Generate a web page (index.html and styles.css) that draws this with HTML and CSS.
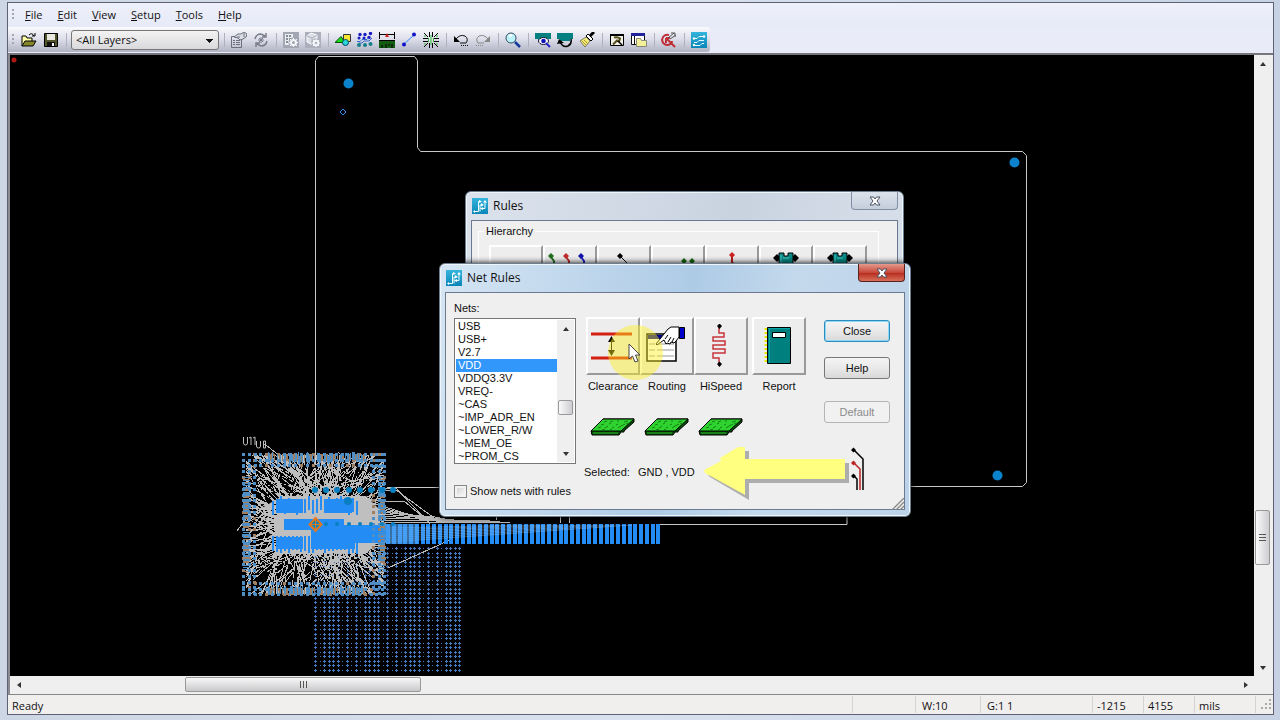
FILE: index.html
```html
<!DOCTYPE html>
<html lang="en">
<head>
<meta charset="utf-8">
<title>PCB Layout</title>
<link rel="stylesheet" href="styles.css">
</head>
<body>
<svg class="defs" aria-hidden="true">
  <defs>
    <linearGradient id="blue" x1="0" y1="0" x2="0" y2="1"><stop offset="0" stop-color="#35b4dc"/><stop offset="1" stop-color="#0a86b8"/></linearGradient>
    <symbol id="app" viewBox="0 0 16 16">
      <rect width="16" height="16" fill="url(#blue)"/>
      <path d="M3 13.500h3.500v-10H8M8 13.500V7h1M13 4v6.500h-3" fill="none" stroke="#eaffff"/>
      <path d="M1 13.500l2-1.500v3zM7 2l3 1.500L7 5zM11 4.500L13 2l2 2.500zM9 5l3 2-3 1.500zM11 9v3l-3-1.500z" fill="#fff"/>
    </symbol>
    <symbol id="board" viewBox="0 0 45 18">
      <path d="M13 1h31v3L34 13v1h-3l-2 3H2l-1-4z" fill="#0b4d0b" stroke="#000"/>
      <path d="M13 1h31L31 13H1z" fill="#2fd32f" stroke="#000"/>
      <path d="M3 15h25" stroke="#27b827"/>
      <path d="M14 4l3-1M20 4l3-1M27 3h2M34 4l4-1M11 7l3-1M19 6l2-1M26 7l2-1M31 8l4-2M8 10l3-1M15 10l3-2M22 10l2-1M28 10l3-2M12 12l3-1M20 12l2-1M36 6l2-1" stroke="#0c6b0c" stroke-width=".8" fill="none"/>
    </symbol>
    <symbol id="part" viewBox="0 0 26 20">
      <path d="M0 6l4-4 4 4-4 4zM18 6l4-4 4 4-4 4z"/>
      <path d="M6 1h5v3h4V1h5v17H6z" fill="#098a86" stroke="#000"/>
      <path d="M8 3v12M10 6h6" stroke="#47c7c0"/>
    </symbol>
    <symbol id="cross" viewBox="0 0 12 10">
      <path d="M1 1h3.500L6 3l1.500-2H11L8 5l3 4H7.500L6 7 4.500 9H1l3-4z" fill="#fff" stroke="#4a5060"/>
    </symbol>
  </defs>
</svg>

<div class="window">
  <div class="client">
    <nav class="menubar">
      <span class="grip"></span>
      <button><u>F</u>ile</button><button><u>E</u>dit</button><button><u>V</u>iew</button><button><u>S</u>etup</button><button><u>T</u>ools</button><button><u>H</u>elp</button>
    </nav>

    <div class="toolrow">
      <div class="toolbar">
        <span class="grip"></span>
        <button class="tool" aria-label="Open"><svg viewBox="0 0 16 16"><path d="M1 14V4h4l1 2h5v3" fill="#ffffa8" stroke="#000"/><path d="M1 14l3-5h11l-3 5z" fill="#85852a" stroke="#000"/><path d="M8 3q3-3 5 1M11 4h3V1" fill="none" stroke="#000"/></svg></button>
        <button class="tool" aria-label="Save"><svg viewBox="0 0 16 16"><path d="M1.500 1.500h13v13h-13z" fill="#55552b" stroke="#000"/><path d="M4 2h8v6H4z" fill="#e8e8e0"/><path d="M4 10h8v4H4z" fill="#111"/><path d="M9 11h2v3H9z" fill="#fff"/></svg></button>
        <span class="sep"></span>
        <select class="layers" aria-label="Layer"><option>&lt;All Layers&gt;</option></select>
        <span class="sep"></span>
        <button class="tool" aria-label="Properties"><svg viewBox="0 0 16 16" fill="none" stroke="#6d707c"><path d="M.5 4.500h10v11H.5zM2 8.500h2M5 8.500h4M2 10.500h2M5 10.500h4M2 12.500h2M5 12.500h4"/><path d="M3 5l4-3h3l3-2 3 2-1 3-3 2-3 1-2-2z" fill="#dcdce6"/><path d="M13 1v4M6 5h3"/></svg></button>
        <button class="tool" aria-label="Cycle"><svg viewBox="0 0 16 16" fill="none" stroke="#7b7e8a" stroke-width="1.500"><path d="M2 7q1-5 6-5l4 2M14 9q-1 5-6 5l-4-2M13 1v4H9M3 15v-4h4"/><path d="M8 5v6M5 8h6M6 6l4 4M10 6l-4 4" stroke-width="1"/></svg></button>
        <span class="sep"></span>
        <button class="tool" aria-label="Board options"><svg viewBox="0 0 16 16"><path d="M0 0h16v16H0z" fill="#a3a6b3"/><path d="M2 2h8v11H2z" fill="#eceef4"/><path d="M3 4h2M6 4h2M3 7h2M6 7h2M3 10h2" stroke="#888b98" stroke-width="2"/><circle cx="10.500" cy="10.500" r="5" fill="#a3a6b3"/><circle cx="10.500" cy="10.500" r="2.500" fill="none" stroke="#f4f6fa" stroke-width="2"/><path d="M10.500 6v2M10.500 13v2M6 10.500h2M13 10.500h2M7 7l2 2M12 12l2 2M14 7l-2 2M9 12l-2 2" stroke="#f4f6fa"/></svg></button>
        <button class="tool" aria-label="Part options"><svg viewBox="0 0 16 16"><path d="M0 0h16v16H0z" fill="#adb0bc"/><path d="M2 4l4-3 6 2v7l-4 3-6-3z" fill="#dcdfe8" stroke="#fff"/><path d="M2 4l5 2 5-3M7 6v6" fill="none" stroke="#adb0bc"/><circle cx="11" cy="11" r="4.500" fill="#adb0bc"/><circle cx="11" cy="11" r="2.200" fill="none" stroke="#f4f6fa" stroke-width="2"/><path d="M11 7v2M11 13v2M7 11h2M13 11h2M8 8l2 2M12 12l2 2M14 8l-2 2M10 12l-2 2" stroke="#f4f6fa"/></svg></button>
        <span class="sep"></span>
        <button class="tool" aria-label="Drafting"><svg viewBox="0 0 16 16"><path d="M0 10.500l6-6 4 6z" fill="#19e019" stroke="#044f04"/><path d="M8.500 2.500h7v7h-7z" fill="#f7e531" stroke="#333"/><circle cx="10.500" cy="10.500" r="3" fill="#2bd7d7" stroke="#046"/></svg></button>
        <button class="tool" aria-label="Design"><svg viewBox="0 0 16 16"><g fill="#1b1bc4"><circle cx="3" cy="2.500" r="1.700"/><circle cx="8" cy="2.500" r="1.700"/><circle cx="13.500" cy="1.500" r="1.700"/><circle cx="2" cy="6" r="1.500"/><circle cx="7" cy="6" r="1.500"/><circle cx="12" cy="5.500" r="1.700"/></g><path d="M0 9.500h3l2-2h5l2-2M2 11h3l2-2h5l3-3" fill="none" stroke="#36c"/><g fill="#14808a"><circle cx="2" cy="13" r="2"/><circle cx="8" cy="13" r="2"/><circle cx="13.500" cy="12" r="2"/></g></svg></button>
        <button class="tool" aria-label="Dimension"><svg viewBox="0 0 16 16"><path d="M.5 0v7M15.500 0v7M1 2.500h14" fill="none" stroke="#000"/><path d="M6 5l2-4 2 4z" fill="#d02020"/><path d="M0 8h16v8H0z" fill="#125c12"/><path d="M0 8.500h16" stroke="#000"/><path d="M3 13v3M7 12v4M9 13h2M13 12v4" stroke="#000"/></svg></button>
        <button class="tool" aria-label="Route"><svg viewBox="0 0 16 16"><path d="M3 12L13 3" stroke="#38f"/><circle cx="3" cy="12.500" r="2" fill="#11c"/><circle cx="13" cy="2.500" r="2" fill="#11c"/></svg></button>
        <button class="tool" aria-label="Fanout"><svg viewBox="0 0 16 16"><path d="M6.500 0v5M9.500 0v5M6.500 16v-5M9.500 16v-5M1 1l4 4M15 1l-4 4M1 15l4-4M15 15l-4-4M0 6.500h5M0 9.500h5M11 6.500h5M11 9.500h5" fill="none" stroke="#000"/><path d="M8 3v10M5.500 6v4M10.500 6v4M1 4h2M13 4h2M1 12h2M13 12h2" stroke="#37b837"/></svg></button>
        <span class="sep"></span>
        <button class="tool" aria-label="Undo"><svg viewBox="0 0 16 16"><path d="M3 7q4-5 9-3 4 3 1 7H7" fill="none" stroke="#111"/><path d="M1 4v6h6z"/><path d="M8 13.500h7" stroke="#111" stroke-dasharray="1 1"/></svg></button>
        <button class="tool" aria-label="Redo"><svg viewBox="0 0 16 16"><path d="M13 7q-4-5-9-3-4 3-1 7h6" fill="none" stroke="#888"/><path d="M15 4v6H9z" fill="#888"/><path d="M1 13.500h7" stroke="#888" stroke-dasharray="1 1"/></svg></button>
        <span class="sep"></span>
        <button class="tool" aria-label="Zoom"><svg viewBox="0 0 16 16"><circle cx="6" cy="6" r="5" fill="#bdf3fb" stroke="#344b62"/><path d="M10 10l5 5" stroke="#113a9b" stroke-width="2.500"/><path d="M4 4l3-1" stroke="#fff" stroke-width="2"/></svg></button>
        <span class="sep"></span>
        <button class="tool" aria-label="Board view"><svg viewBox="0 0 16 16"><path d="M0 1h16v6h-3v2H3V7H0z" fill="#058080"/><ellipse cx="8.500" cy="9" rx="5" ry="3.500" fill="#fff" stroke="#113"/><circle cx="8.500" cy="9" r="2.300" fill="#11b"/><path d="M11 11l4 4" stroke="#22c" stroke-width="2"/></svg></button>
        <button class="tool" aria-label="Redraw"><svg viewBox="0 0 16 16"><path d="M0 1h16v6h-3v2H3V7H0z" fill="#058080"/><path d="M3 10q3 6 8 4 4-2 3-7" fill="none" stroke="#000" stroke-width="1.500"/><path d="M0 12l2-5 5 4z"/></svg></button>
        <button class="tool" aria-label="Clean"><svg viewBox="0 0 16 16"><path d="M1 9l6-4 4 4-5 6z" fill="#f5ec77" stroke="#776"/><path d="M7 4l2-2 5 5-2 2z" fill="#fff" stroke="#000"/><path d="M11 4l4-4" stroke="#000" stroke-width="3"/><path d="M3 9l4 4M5 8l4 4" stroke="#a93"/></svg></button>
        <span class="sep"></span>
        <button class="tool" aria-label="Tools window"><svg viewBox="0 0 16 16"><path d="M1.500 2.500h13v11h-13z" fill="#f2f2e8" stroke="#000"/><path d="M1 3h14" stroke="#000" stroke-width="2"/><path d="M5 5.500q4-1 6 1l-1 3-2-1-4 4" fill="none" stroke="#55501e" stroke-width="2"/><path d="M9 9l4 4" stroke="#000" stroke-width="1.500"/></svg></button>
        <button class="tool" aria-label="Project window"><svg viewBox="0 0 16 16"><path d="M.5 1.500h13v11H.5z" fill="#fff" stroke="#111"/><path d="M0 2.500h14" stroke="#229" stroke-width="3"/><path d="M3.500 4v9" stroke="#111"/><path d="M5.500 14.500v-8h4l1 2h5v6z" fill="#f4f19b" stroke="#887"/></svg></button>
        <span class="sep"></span>
        <button class="tool" aria-label="Quick route"><svg viewBox="0 0 16 16"><path d="M8 3q-6-1-7 5 1 5 6 5 4-1 4-4" fill="none" stroke="#c03038" stroke-width="2"/><path d="M5 6l9 9M5 6v5M5 6h4" stroke="#c03038" stroke-width="2"/><path d="M7 6l6-5M10 1h4v4M9 7l6-4" fill="none" stroke="#555"/></svg></button>
        <span class="sep"></span>
        <button class="tool" aria-label="Router"><svg viewBox="0 0 16 16"><path d="M0 0h16v16H0z" fill="url(#blue)"/><path d="M3 6.500h3l2-2h5M3 10.500h3l2-2h5M3 13.500h6l2-2h2" fill="none" stroke="#e9faff"/><circle cx="13" cy="4.500" r="1.200" fill="#fff"/><circle cx="3" cy="6.500" r="1.200" fill="#fff"/><circle cx="3" cy="13" r="1.200" fill="#fff"/></svg></button>
      </div>
    </div>

    <main class="workspace">
      <div class="canvas">
        <svg class="pcb" aria-label="Board layout">
          <g transform="translate(-10 -55)">
            <circle cx="14" cy="60" r="2.500" fill="#b01818"/>
            <g class="outline">
              <path d="M315.500 490V60.500l3-4h96l3 4v87l3 4h602l4 4v327l-4 4H908M446 487.500H387M560.500 514v9M569.500 514v9M496.500 514v6M660 524.500h187V516"/>
            </g>
            <g class="pads">
              <circle cx="348.500" cy="83.500" r="5"/><circle cx="1014.500" cy="162.500" r="5"/><circle cx="997.500" cy="475.500" r="5"/>
            </g>
            <path d="M343 109l3 3-3 3-3-3z" fill="none" stroke="#2390f0"/>
            <g id="nets"></g>
            <path d="M243.500 437v6q0 2 2 2t2-2v-6M249 438l2-1v8M253 438l2-1v8M256.500 441v5q0 2 2 2t2-2v-5M263.500 441h2v7h-2zM263 444.500h3" fill="none" stroke="#bdbdbd"/>
          </g>
        </svg>

        <section class="dialog rules" aria-label="Rules">
          <header class="titlebar"><svg class="appicon"><use href="#app"/></svg><h2>Rules</h2><button class="close" aria-label="Close Rules"><svg><use href="#cross"/></svg></button></header>
          <div class="dialog-body">
            <fieldset class="hierarchy">
              <legend>Hierarchy</legend>
              <div class="rule-tools">
                <button class="tile" aria-label="Default"></button>
                <button class="tile" aria-label="Class"><svg viewBox="0 0 44 44"><g fill="none" stroke-width="2"><path d="M3 5l3 4v32" stroke="#207020"/><path d="M18 5l3 4v32" stroke="#c02a2a"/><path d="M33 5l3 4v32" stroke="#22c"/></g><path d="M0 4l3-3 3 3-3 3z" fill="#207020"/><path d="M15 4l3-3 3 3-3 3z" fill="#c02a2a"/><path d="M30 4l3-3 3 3-3 3z" fill="#11a"/></svg></button>
                <button class="tile" aria-label="Net"><svg viewBox="0 0 44 44"><path d="M18 4l12 12v25" fill="none" stroke="#000"/><path d="M15 4l3-3 3 3-3 3z"/></svg></button>
                <button class="tile" aria-label="Group"><svg viewBox="0 0 44 44" fill="#126a12"><path d="M25 9l3-3 3 3-3 3zM33 9l3-3 3 3-3 3z"/></svg></button>
                <button class="tile" aria-label="Pin pairs"><svg viewBox="0 0 44 44"><path d="M22 4v6l3 4v24" fill="none" stroke="#b91c1c" stroke-width="2"/><path d="M19 3l3-3 3 3-3 3z" fill="#c22"/></svg></button>
                <button class="tile" aria-label="Decal"><svg viewBox="-9 0 44 44"><use href="#part" width="26" height="20"/></svg></button>
                <button class="tile" aria-label="Component"><svg viewBox="-9 0 44 44"><use href="#part" width="26" height="20"/></svg></button>
              </div>
            </fieldset>
          </div>
        </section>

        <section class="dialog netrules" aria-label="Net Rules">
          <header class="titlebar"><svg class="appicon"><use href="#app"/></svg><h2>Net Rules</h2><button class="close red" aria-label="Close Net Rules"><svg><use href="#cross"/></svg></button></header>
          <div class="dialog-body net-body">
            <div class="nets">
              <label for="netlist">Nets:</label>
              <div class="listbox">
                <select id="netlist" size="11">
                  <option>USB</option><option>USB+</option><option>V2.7</option><option selected>VDD</option><option>VDDQ3.3V</option><option>VREQ-</option><option>~CAS</option><option>~IMP_ADR_EN</option><option>~LOWER_R/W</option><option>~MEM_OE</option><option>~PROM_CS</option>
                </select>
                <div class="vbar small"><button class="arrow up" aria-label="Up"></button><span class="fill-a"></span><span class="thumb"></span><span class="fill-b"></span><button class="arrow down" aria-label="Down"></button></div>
              </div>
              <label class="check"><input type="checkbox">Show nets with rules</label>
            </div>

            <div class="middle">
              <div class="actions">
                <div class="action"><button class="tile" aria-labelledby="l1"><svg viewBox="0 0 44 44"><path d="M0 10h41M0 34h41" stroke="#d51f12" stroke-width="3"/><path d="M20.500 14v16" stroke="#000"/><path d="M17 18l3.500-6 3.500 6zM17 26l3.500 6 3.500-6z"/></svg></button><span id="l1">Clearance</span></div>
                <div class="action"><button class="tile" aria-labelledby="l2"><svg viewBox="0 0 44 44"><path d="M2 10h29v27H2z" fill="#fff" stroke="#000" stroke-width="1.500"/><path d="M3 11h27v4H3z" fill="#008"/><path d="M4 20h25M4 26h25M4 32h25" stroke="#999" stroke-dasharray="6 2 17 2"/><path d="M11 20l8-10 4-5 3-2h8v10l-3 4-2 2-3-1-1 2-3-1-1 1-2-4-7 5z" fill="#fff" stroke="#000"/><path d="M20 15l3-4M23 18l3-5M27 18l2-4" stroke="#000"/><path d="M34.500 3.500h5v11h-5z" fill="#00c" stroke="#000"/></svg></button><span id="l2">Routing</span></div>
                <div class="action"><button class="tile" aria-labelledby="l3"><svg viewBox="0 0 44 44"><path d="M20 2v7h5v4H14v4h12v4H14v4h12v4H14v5h6v8" fill="none" stroke="#c8353c" stroke-width="1.500"/><path d="M18 2l2.500-2.500L23 2l-2.500 3zM18 40l2.500-2.500L23 40l-2.500 3z"/></svg></button><span id="l3">HiSpeed</span></div>
                <div class="action last"><button class="tile" aria-labelledby="l4"><svg viewBox="0 0 44 44"><path d="M9 4v36" stroke="#e9e900" stroke-width="3" stroke-dasharray="2 2"/><path d="M10.500 3.500h23v36h-23z" fill="#007f7f" stroke="#000"/><path d="M11 4.500h22M12.500 5v34" stroke="#00a8a8"/><path d="M15.500 8.500h13v5h-13z" fill="#fff" stroke="#000"/></svg></button><span id="l4">Report</span></div>
              </div>
              <div class="boards"><svg><use href="#board"/></svg><svg><use href="#board"/></svg><svg><use href="#board"/></svg></div>
              <p class="selected"><span>Selected:</span><span>GND , VDD</span></p>
            </div>

            <div class="side">
              <button class="push default">Close</button>
              <button class="push">Help</button>
              <button class="push off" disabled>Default</button>
              <svg class="traces" viewBox="0 0 16 44"><path d="M3 3l9 9v31" fill="none" stroke="#000" stroke-width="1.500"/><path d="M3 16l6 6v21" fill="none" stroke="#b22" stroke-width="1.500"/><path d="M3 29l3 3v11" fill="none" stroke="#000" stroke-width="1.500"/><path d="M0 3l2.500-2.500L5 3 2.500 5.500zM0 29l2.500-2.500L5 29l-2.500 2.500z"/><path d="M0 16l2.500-2.500L5 16l-2.500 2.500z" fill="#b22"/></svg>
            </div>
          </div>
          <svg class="sizer" viewBox="0 0 12 12"><path d="M0 12L12 0M4 12l8-8M8 12l4-4" stroke="#888" stroke-width="1.300"/></svg>
          <svg class="callout" viewBox="0 0 150 60"><path d="M4 30l15-8-1-4L38 6h7v12h100v20H45v17L6 32z" fill="#777" opacity=".55"/><path d="M0 25l17-9-1-3L34 2h7v12h100v20H41v16L1 28z" fill="#ffff80"/></svg>
          <span class="halo"></span>
          <svg class="pointer" viewBox="0 0 13 20"><path d="M1 1v15l3.500-3 2.500 6 3-1-2.500-6H12z" fill="#fff" stroke="#444"/></svg>
        </section>
      </div>
      <div class="vbar"><button class="arrow up" aria-label="Scroll up"></button><span class="fill-a"></span><span class="thumb"><i></i><i></i><i></i></span><span class="fill-b"></span><button class="arrow down" aria-label="Scroll down"></button></div>
      <div class="hbar"><button class="arrow left" aria-label="Scroll left"></button><span class="fill-a"></span><span class="thumb"><i></i><i></i><i></i></span><span class="fill-b"></span><button class="arrow right" aria-label="Scroll right"></button></div>
      <div class="corner"></div>
    </main>

    <footer class="status">
      <span class="ready">Ready</span><span class="cell blank"></span><span class="cell width">W:10</span><span class="cell grid">G:1 1</span><span class="cell">-1215</span><span class="cell">4155</span><span class="cell units">mils</span>
      <span class="cell corner-grip"><svg viewBox="0 0 12 12" fill="#aaa"><path d="M9 1h2v2H9zM5 5h2v2H5zM9 5h2v2H9zM1 9h2v2H1zM5 9h2v2H5zM9 9h2v2H9z"/></svg></span>
    </footer>
  </div>
</div>
<script src="board.js"></script>
</body>
</html>
```

FILE: styles.css
```css
* { box-sizing: border-box; }
body { margin: 0; background: #000; font: 11px/16px "Open Sans", "Noto Sans", sans-serif; color: #111; }
button { font: inherit; color: inherit; border: 0; padding: 0; background: none; }
.defs { position: absolute; width: 0; height: 0; }

.window { height: 100vh; padding: 2px 6px 5px 7px; background: linear-gradient(90deg, #cdd6e4, #d9e1ee 50%, #c6d2e4); }
.client { height: 100%; display: flex; flex-direction: column; border: 1px solid #5d6173; background: #e9ebf8; }

.menubar { flex: none; height: 24px; display: flex; align-items: center; gap: 1px; padding: 0 0 1px 4px; background: linear-gradient(#eef0fa, #e6e9f7); }
.menubar button { padding: 0 7px; }
.menubar .grip { margin-right: 3px; }
.grip { width: 2px; height: 12px; background: repeating-linear-gradient(#a3a6b6 0 2px, transparent 2px 4px); }

.toolrow { flex: none; height: 26px; display: flex; padding-bottom: 1px; background: #e9ebf8; }
.toolbar { display: flex; align-items: center; padding-left: 4px; border-radius: 0 3px 3px 0; background: linear-gradient(#fafaff, #dcdde9 50%, #b1b3c4); }
.toolbar .grip { margin-right: 4px; }
.tool { width: 22px; height: 22px; display: grid; place-items: center; }
.tool svg { width: 16px; height: 16px; }
.sep { width: 8px; height: 14px; background: linear-gradient(#aeb1c0, #aeb1c0) 4px 0 / 1px 100% no-repeat; }
.layers { width: 148px; height: 20px; margin: 0 1px; padding: 0 4px; appearance: none; border: 1px solid #777; border-radius: 3px; font: inherit; color: #111;
  background: linear-gradient(135deg, #111 50%, transparent 50%) 138px 8px / 4px 4px no-repeat, linear-gradient(225deg, #111 50%, transparent 50%) 134px 8px / 4px 4px no-repeat, linear-gradient(#f3f3f3, #d9d9dc); }

.workspace { flex: 1; min-height: 0; display: grid; grid-template: minmax(0, 1fr) 18px / minmax(0, 1fr) 19px; border-top: 2px solid #74757d; border-left: 2px solid #8b8c93; background: #efefef; }
.canvas { position: relative; overflow: hidden; background: #000; }
.pcb { display: block; width: 100%; height: 100%; }
.outline { fill: none; stroke: #c8c8c8; }
.pads { fill: #0a82cc; }

.vbar, .hbar { display: flex; background: #efefef; }
.vbar { flex-direction: column; width: 17px; }
.arrow { flex: none; width: 17px; height: 17px; display: grid; place-items: center; }
.arrow::before { content: ""; border: 3px solid transparent; }
.up::before { border-bottom: 4px solid #333; border-top: 0; }
.down::before { border-top: 4px solid #333; border-bottom: 0; }
.left::before { border-right: 4px solid #333; border-left: 0; }
.right::before { border-left: 4px solid #333; border-right: 0; }
.thumb { display: flex; align-items: center; justify-content: center; gap: 2px; border: 1px solid #999; border-radius: 2px; }
.thumb i { background: #555; }
.vbar .thumb { flex-direction: column; width: 15px; height: 55px; margin-left: 1px; background: linear-gradient(90deg, #fafafa, #cdcdd2); }
.vbar .thumb i { width: 7px; height: 1px; }
.vbar .fill-a { flex: 438; }
.vbar .fill-b { flex: 94; }
.hbar .thumb { width: 236px; height: 15px; margin-top: 1px; background: linear-gradient(#f8f8f8, #c9c9cc); }
.hbar .thumb i { width: 1px; height: 7px; }
.hbar .fill-a { flex: 158; }
.hbar .fill-b { flex: 816; }

.status { flex: none; height: 20px; display: flex; align-items: center; border-top: 1px solid #888; background: #f1eeee; }
.ready { flex: 1; padding: 2px 4px 0; }
.cell { width: 51px; height: 17px; padding: 2px 4px 0; border-left: 1px solid #d5d2d2; }
.blank { width: 63px; }
.width { width: 65px; padding-left: 6px; }
.grid { width: 112px; padding-left: 6px; }
.units { width: 61px; }
.corner-grip { width: 18px; }
.corner-grip svg { width: 12px; height: 12px; }

.dialog { position: absolute; padding: 0 5px 6px; border: 1px solid #6e7d8e; border-radius: 6px; font-family: "Liberation Sans", Arial, sans-serif; }
.rules { left: 455px; top: 136px; width: 439px; background: linear-gradient(100deg, #dbe2ec, #c9d3e0 60%, #d8e0ea); box-shadow: inset 0 0 0 1px #eef5fb; }
.netrules { left: 429px; top: 208px; width: 472px; background: linear-gradient(100deg, #d5e5f3, #aecbe6 50%, #c4d9ec 70%, #bcd2e8); box-shadow: inset 0 0 0 1px #eef5fb, 0 0 6px #000; }
.titlebar { height: 28px; display: flex; align-items: center; padding-left: 1px; }
.titlebar h2 { flex: 1; margin: 0; font: 12px/16px "Open Sans", "Noto Sans", sans-serif; }
.appicon { width: 16px; height: 16px; margin-right: 5px; }
.close { align-self: flex-start; width: 47px; height: 18px; display: grid; place-items: center; border: 1px solid #8390a3; border-top: 0; border-radius: 0 0 4px 4px; background: linear-gradient(#dce3ec, #c4cedb); }
.close svg { width: 12px; height: 10px; }
.red { border-color: #59201c; background: linear-gradient(#e29a8b, #c8483a 50%, #b42b1d 52%, #d8705a); }
.dialog-body { border: 1px solid #6b7a90; background: #efefef; }

.rules .dialog-body { padding: 3px 18px 12px 6px; }
.hierarchy { margin: 0; padding: 6px 0 8px 10px; border: 1px solid #fff; }
.hierarchy legend { margin-left: -5px; padding: 0 2px; line-height: 15px; }
.rule-tools { display: flex; }
.tile { flex: none; width: 54px; height: 58px; display: grid; place-items: center; border: 2px solid; border-color: #fff #999 #999 #fff; background: #ededed; }
.tile svg { width: 44px; height: 44px; }

.net-body { display: grid; grid-template-columns: 122px 1fr 66px; column-gap: 8px; padding: 7px 14px 0 8px; height: 218px; }
.nets label { display: block; }
.listbox { display: flex; height: 146px; margin: 2px 0 19px; padding: 1px; border: 1px solid #777; background: #fff; }
.listbox select { flex: 1; min-width: 0; height: 143px; padding: 0; border: 0; outline: 0; overflow: hidden; scrollbar-width: none; background: #fff; font: 11px/13px "Liberation Sans", Arial, sans-serif; color: #111; }
.listbox option { height: 13px; min-height: 0; padding: 0 2px; line-height: 13px; }
.listbox option:checked { background: linear-gradient(#3297fb, #3297fb); -webkit-text-fill-color: #fff; }
.small .fill-a { flex: 65; }
.small .fill-b { flex: 31; }
.vbar.small .thumb { height: 15px; }
.nets .check { display: flex; align-items: center; gap: 3px; }
.check input { appearance: none; width: 13px; height: 13px; margin: 0; border: 1px solid #888; background: linear-gradient(135deg, #ccc, #fff); box-shadow: inset 0 0 0 2px #f2f2f2; }

.middle { padding-top: 17px; }
.actions { display: flex; padding-left: 2px; }
.action { width: 54px; display: flex; flex-direction: column; align-items: center; gap: 3px; white-space: nowrap; }
.last { margin-left: 4px; }
.boards { display: flex; gap: 9px; padding: 24px 0 0 6px; }
.boards svg { width: 45px; height: 18px; }
.selected { display: flex; gap: 8px; margin: 28px 0 0; }

.side { display: flex; flex-direction: column; align-items: flex-start; padding-top: 20px; }
.push { width: 66px; height: 22px; margin-bottom: 15px; border: 1px solid #777; border-radius: 3px; background: linear-gradient(#f4f4f4, #e9e9e9 50%, #d8d8d8); }
.push.default { border-color: #2a8cc0; box-shadow: inset 0 0 0 1px #8fd8f5; }
.push.off { margin: 7px 0 24px; color: #8b8b8b; border-color: #b5b5b5; background: #f1f1f1; }
.traces { width: 16px; height: 44px; margin-left: 27px; }

.sizer { position: absolute; right: 6px; bottom: 6px; width: 12px; height: 12px; }
.callout { position: absolute; left: 264px; top: 181px; width: 150px; height: 60px; }
.halo { position: absolute; left: 168px; top: 61px; width: 55px; height: 55px; border-radius: 50%; background: rgba(255, 240, 30, .45); }
.pointer { position: absolute; left: 188px; top: 79px; width: 13px; height: 20px; }
```

FILE: board.js
```js
(function () {
  var root = document.getElementById('nets');
  var seed = 7;
  function rnd() { seed = (seed * 16807) % 2147483647; return seed / 2147483647; }
  function r(n) { return Math.round(n); }
  function path(d, attrs) {
    var p = document.createElementNS('http://www.w3.org/2000/svg', 'path');
    p.setAttribute('d', d);
    Object.keys(attrs).forEach(function (k) { p.setAttribute(k, attrs[k]); });
    root.appendChild(p);
  }
  function line(x1, y1, x2, y2) { return 'M' + r(x1) + ' ' + r(y1) + 'L' + r(x2) + ' ' + r(y2); }
  function box(x, y, w, h) { return 'M' + r(x) + ' ' + r(y) + 'h' + w + 'v' + h + 'h-' + w + 'z'; }

  // via array under the bus
  var d = '', i, x, y, c, s, row;
  for (row = 0; row < 28; row++) {
    y = 548 + row * 4.5;
    for (c = 0; c < 33; c++) {
      x = r(315 + c * 4.5);
      var k = c % 9, dot = k === 1 || k === 6 || k === 8;
      d += box(x, y, 1, 1);
      if (!dot) d += box(x - 1, y, 3, 1) + box(x, y - 1, 1, 3);
    }
  }
  path(d, { fill: '#4577bd' });

  // connections between the outer pads and the core
  d = '';
  for (i = 0; i < 270; i++) {
    s = i % 4;
    var t = rnd() * 128 + 8;
    x = s < 2 ? 243 + t : (s === 2 ? 246 : 384);
    y = s < 2 ? (s ? 455 : 594) : 453 + t;
    d += line(x, y, x + (275 + rnd() * 85 - x) * .85, y + (495 + rnd() * 58 - y) * .85);
  }
  for (i = 0; i < 60; i++) {
    x = 250 + rnd() * 110; y = 462 + rnd() * 110;
    d += line(x, y, x + rnd() * 60 - 30, y + rnd() * 50 - 25);
  }
  path(d, { fill: 'none', stroke: '#bdbdbd', 'stroke-width': 1, 'shape-rendering': 'crispEdges' });
  path('M262 508l20-12h84l14 14v30l-14 14h-90z', { fill: '#bfbfbf' });
  d = '';
  for (i = 0; i < 420; i++) {
    x = 250 + rnd() * 130; y = rnd() < .5 ? 463 + rnd() * 32 : 553 + rnd() * 34;
    d += box(x, y, 1 + r(rnd()), 1 + r(rnd() * 2));
  }
  for (i = 0; i < 110; i++) d += box(252 + rnd() * 24, 480 + rnd() * 90, 2, 1);
  path(d, { fill: '#080808' });

  // fan-out lines towards the right-hand bus
  d = '';
  for (i = 0; i < 9; i++) d += line(382, 506 + i * 2, 430 + i * 10, 521 + i % 3);
  d += 'M380 488h16l34 36M386 490h10l45 33M386 501h18l26 22M388 568l62-28M390 513l45 4 30 6';
  path(d, { fill: 'none', stroke: '#b8b8b8', 'shape-rendering': 'crispEdges' });

  // bus of long pads
  d = '';
  for (i = 0; i < 48; i++) d += box(386 + i * 5.75, 524, 4, 20);
  path(d, { fill: '#238cf5' });
  d = '';
  for (i = 0; i < 8; i++) d += line(389, 528 + i * 2, 520 + i * 16, 525);
  path(d, { stroke: '#a9c8e8', opacity: '.35' });
  path(box(386, 524, 32, 20), { fill: '#4da3f5', opacity: '.6' });

  // core pads
  d = box(277, 499, 26, 14) + box(326, 499, 26, 14) + box(284, 519, 60, 11) + box(277, 537, 26, 12) + box(311, 526, 44, 23) + box(342, 525, 44, 18);
  for (i = 0; i < 22; i++) {
    d += box(272 + i * 4, 496 + rnd() * 5, 2, 14) + box(272 + i * 4, 536, 2, 13 + r(rnd() * 5));
  }
  path(d, { fill: '#238cf5' });

  // outer pads
  var blue = '', brown = '';
  for (i = 0; i < 25; i++) {
    for (c = 0; c < 3; c++) {
      var a = 242 + i * 5.8, b = 453 + i * 5.8, e = c * 5.5;
      [[a, 453 + e], [a, 593 - e], [242 + e, b], [383 - e, b]].forEach(function (q) {
        if (rnd() < .75) blue += box(q[0], q[1], 3, 3); else brown += box(q[0], q[1], 3, 3);
      });
    }
  }
  for (i = 0; i < 62; i++) {
    x = 267 + rnd() * 95;
    blue += box(x, 452 + rnd() * 4, 1, 8) + box(x, 588 - rnd() * 3, 1, 8);
    brown += box(x + 2, 454, 1, 7) + box(x + 2, 588, 1, 7);
    y = 477 + rnd() * 95;
    blue += box(243, y, 7, 1) + box(378, y, 7, 1);
    brown += box(243, y + 2, 6, 1) + box(380, y + 2, 5, 1);
  }
  path(brown, { fill: '#a08063' });
  path(blue, { fill: '#4f8fc6' });

  // round vias
  d = '';
  function disc(cx, cy, q) { return 'M' + (cx - q) + ' ' + cy + 'a' + q + ' ' + q + ' 0 1 0 ' + 2 * q + ' 0a' + q + ' ' + q + ' 0 1 0 -' + 2 * q + ' 0'; }
  for (i = 0; i < 8; i++) d += disc(r(315 + i * 11.2), 490, 3) + disc(r(315 + i * 11.2), 524, 2);
  d += disc(348, 501, 4);
  path(d, { fill: '#087fc0' });
  path('M315.500 518l6 6.500-6 6.500-6-6.500z', { fill: '#1585b8', stroke: '#e07820', 'stroke-width': 2 });
  path('M309 524.500h13M315.500 518v13', { stroke: '#e07820' });
})();
```
